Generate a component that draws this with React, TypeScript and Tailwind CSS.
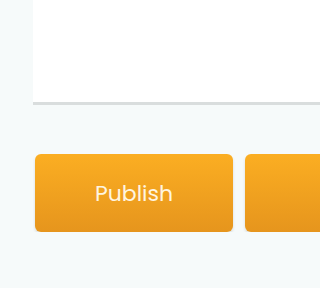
export default function App() {
  return (
    <div className="h-screen w-full overflow-hidden bg-[#f6fafa] pl-[33px] font-['Poppins','Inter',sans-serif]">
      {/* Editor panel */}
      <div className="h-[102px] bg-white" />
      <div className="h-[3px] bg-[#d9dddd]" />

      {/* Actions */}
      <div className="mt-[49px] flex gap-[12px] overflow-hidden pl-[2px]">
        <button className="flex h-[78px] w-[198px] shrink-0 items-center justify-center rounded-[6px] bg-gradient-to-b from-[#fbae22] to-[#e6951d] text-[22px] font-normal text-[#fff5e0] shadow-[0_2px_3px_rgba(0,0,0,0.12)]">
          Publish
        </button>
        <button className="h-[78px] w-[198px] shrink-0 rounded-[6px] bg-gradient-to-b from-[#fbae22] to-[#e6951d] shadow-[0_2px_3px_rgba(0,0,0,0.12)]" />
      </div>
    </div>
  );
}
